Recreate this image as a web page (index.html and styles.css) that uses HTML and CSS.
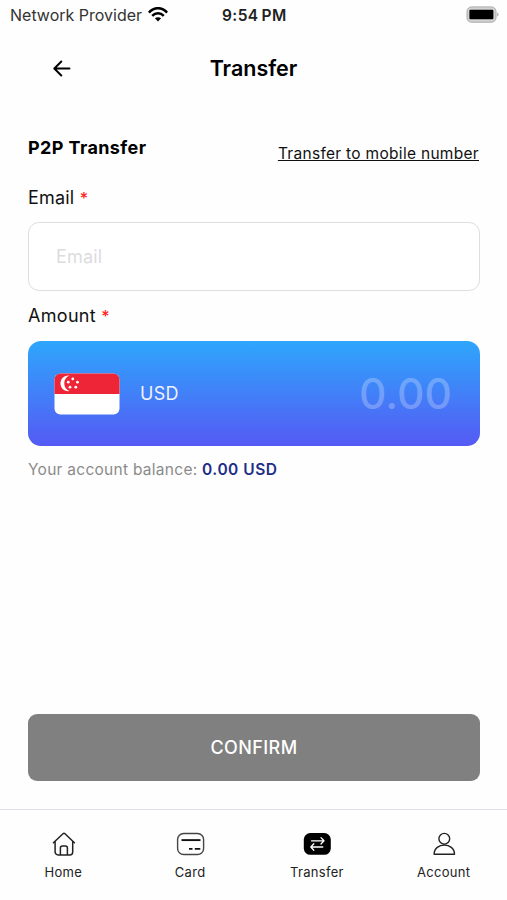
FILE: index.html
```html
<!DOCTYPE html>
<html lang="en">
<head>
<meta charset="utf-8">
<meta name="viewport" content="width=device-width, initial-scale=1">
<title>Transfer</title>
<link rel="stylesheet" href="styles.css">
</head>
<body>
<div class="status">
  <div class="carrier"><span>Network Provider</span>
    <svg width="20" height="15" viewBox="0 0 20 15" fill="none" stroke="#000" stroke-width="2.5"><path d="M.9 5.6C6-.3 14-.3 19.100 5.600M4.200 8.900C7.600 5.300 12.400 5.300 15.800 8.900"/><path d="M10 14.500 6.900 11.300C8.700 9.800 11.300 9.800 13.100 11.300Z" fill="#000" stroke="none"/></svg>
  </div>
  <time class="clock">9:54<span class="period">PM</span></time>
  <svg class="battery" width="33" height="17" viewBox="0 0 33 17"><rect x="1" y=".9" width="29" height="15.300" rx="4.500" fill="#d2d2d2" stroke="#aaa" stroke-width="1"/><rect x="3.400" y="3.800" width="24" height="9.500" rx="1" fill="#000"/><path d="M31.200 6.500c1.800.7 1.800 3.300 0 4z" fill="#aaa"/></svg>
</div>
<header class="header">
  <svg class="back" width="18" height="17" viewBox="0 0 18 17" fill="none" stroke="#000" stroke-width="1.900" stroke-linecap="round" stroke-linejoin="round"><path d="M16.500 8.500H1.500M8.300 1.500l-7 7 7 7"/></svg>
  <h1>Transfer</h1>
</header>
<main class="content">
  <div class="heading"><h2>P2P Transfer</h2><a class="switch">Transfer to mobile number</a></div>
  <label class="label" for="email">Email <span class="req">*</span></label>
  <input class="email" id="email" type="text" placeholder="Email">
  <div class="label amount-label">Amount <span class="req">*</span></div>
  <section class="amount">
    <svg class="flag" width="66" height="42" viewBox="0 0 66 42"><rect x=".5" y=".5" width="65" height="41" rx="6" fill="#fff"/><path d="M.5 21V6.500a6 6 0 0 1 6-6h53a6 6 0 0 1 6 6V21z" fill="#ee2536"/><path d="M15.500 2.500C3.500 1.500 3.500 19 15.500 18.100 8.500 15.500 8.500 5 15.500 2.500z" fill="#fff"/><g fill="#fff"><circle cx="18.800" cy="5.900" r="1.400"/><circle cx="14.300" cy="9.200" r="1.400"/><circle cx="23.500" cy="9.200" r="1.400"/><circle cx="16" cy="14.200" r="1.400"/><circle cx="21.800" cy="14.200" r="1.400"/></g></svg>
    <span class="currency">USD</span>
    <span class="value">0.00</span>
  </section>
  <p class="balance"><span class="caption">Your account balance:</span> <b>0.00 USD</b></p>
  <button class="confirm">CONFIRM</button>
</main>
<nav class="tabs">
  <a class="tab"><svg width="28" height="26" viewBox="0 0 28 26" fill="none" stroke="#222" stroke-width="1.500" stroke-linecap="round" stroke-linejoin="round"><path d="M4.400 11.700 14 2.700q1-.9 2 0L25.400 11.700M6.100 10.600v10.300a3 3 0 0 0 3 3h11.600a3 3 0 0 0 3-3V10.600M11.400 23.600v-6.500a2 2 0 0 1 2-2h3a2 2 0 0 1 2 2V23.600"/></svg><span>Home</span></a>
  <a class="tab"><svg width="30" height="26" viewBox="0 0 30 26" fill="none" stroke="#444" stroke-width="1.400"><rect x="2.600" y="2.500" width="26" height="21" rx="6"/><path d="M6.500 9.100h19" stroke="#111" stroke-width="1.900"/><path d="M14 17.800h3.500M19.800 17.800h5.500" stroke="#111" stroke-width="1.700"/></svg><span>Card</span></a>
  <a class="tab"><svg width="28" height="26" viewBox="0 0 28 26" fill="none" stroke="#fff" stroke-width="1.300" stroke-linecap="round" stroke-linejoin="round"><rect x=".8" y="2" width="27" height="21.800" rx="6.500" fill="#000" stroke="none"/><path d="M8.500 9.800h12M18 6.600l3 3.200-3 3.200M19.800 16H8M10.800 12.800 7.800 16l3 3.200"/></svg><span>Transfer</span></a>
  <a class="tab"><svg width="28" height="26" viewBox="0 0 28 26" fill="none" stroke="#222" stroke-width="1.400" stroke-linejoin="round"><circle cx="14.300" cy="7.800" r="5.400"/><path d="M4.100 23.300C4.100 11 24.500 11 24.500 23.300Z"/></svg><span>Account</span></a>
</nav>
</body>
</html>
```

FILE: styles.css
```css
* { box-sizing: border-box; }
body {
  margin: 0;
  height: 900px;
  display: flex;
  flex-direction: column;
  overflow: hidden;
  background: #fefefe;
  color: #111;
  font-family: Inter, "Liberation Sans", sans-serif;
  white-space: nowrap;
}
h1, h2, p { margin: 0; }
svg { flex: none; display: block; }
.status {
  height: 30px;
  padding: 0 8px 0 10px;
  display: grid;
  grid-template-columns: 212px 1fr auto;
  align-items: center;
}
.carrier { display: flex; align-items: center; gap: 6px; font-size: 16px; color: #333; }
.carrier svg { margin-top: -2px; }
.clock { font-size: 15.500px; font-weight: 600; letter-spacing: .4px; color: #222; }
.period { margin-left: 3px; }
.battery { margin-top: -2px; }
.header {
  height: 76px;
  padding: 0 53px;
  display: grid;
  grid-template-columns: 18px 1fr 18px;
  align-items: center;
}
.header h1 { text-align: center; font-size: 21.500px; font-weight: 600; line-height: 25px; color: #000; }
.content { flex: 1; padding: 28px 27px 28px 28px; display: flex; flex-direction: column; }
.heading { height: 36px; display: flex; justify-content: space-between; align-items: flex-start; }
.heading h2 { font-size: 18px; line-height: 28px; font-weight: 700; letter-spacing: .4px; color: #000; }
.switch { margin-top: 6px; margin-right: 1px; font-size: 15.500px; letter-spacing: .3px; line-height: 28px; text-decoration: underline; text-underline-offset: 1px; text-decoration-skip-ink: none; }
.label { margin-top: 16px; height: 24px; font-size: 18px; line-height: 24px; letter-spacing: .2px; }
.req { font-size: 16px; font-weight: 500; color: #f22; }
.email {
  margin: 12px 0 0;
  width: 100%;
  height: 69px;
  padding: 0 27px;
  border: 1px solid #dedee2;
  border-radius: 11px;
  background: #fff;
  font: 18px Inter, "Liberation Sans", sans-serif;
  letter-spacing: .2px;
}
.email::placeholder { color: #dcdcdf; opacity: 1; }
.amount-label { margin-top: 13px; letter-spacing: .3px; }
.amount {
  margin-top: 13px;
  height: 105px;
  padding: 0 28px 0 26px;
  display: flex;
  align-items: center;
  border-radius: 13px;
  background: linear-gradient(#2ea6fc, #555af4);
  color: #fff;
}
.currency { margin-left: 20px; font-size: 18px; letter-spacing: .3px; opacity: .9; }
.value { margin-left: auto; font-size: 42.500px; line-height: 50px; font-weight: 500; color: rgba(255, 255, 255, .26); }
.balance { margin-top: 12px; font-size: 15.500px; line-height: 24px; letter-spacing: .27px; color: #8b8b8b; }
.balance b { font-weight: 600; letter-spacing: .5px; color: #202d88; }
.confirm {
  margin-top: auto;
  height: 67px;
  border: 0;
  border-radius: 9px;
  background: #808080;
  color: #fff;
  font: 500 18px Inter, "Liberation Sans", sans-serif;
  letter-spacing: .4px;
}
.tabs {
  height: 91px;
  padding-top: 21px;
  border-top: 1px solid #dedee8;
  display: grid;
  grid-template-columns: repeat(4, 1fr);
}
.tab { display: flex; flex-direction: column; align-items: center; gap: 6px; font-size: 13px; line-height: 18px; letter-spacing: .3px; color: #222; }
```
